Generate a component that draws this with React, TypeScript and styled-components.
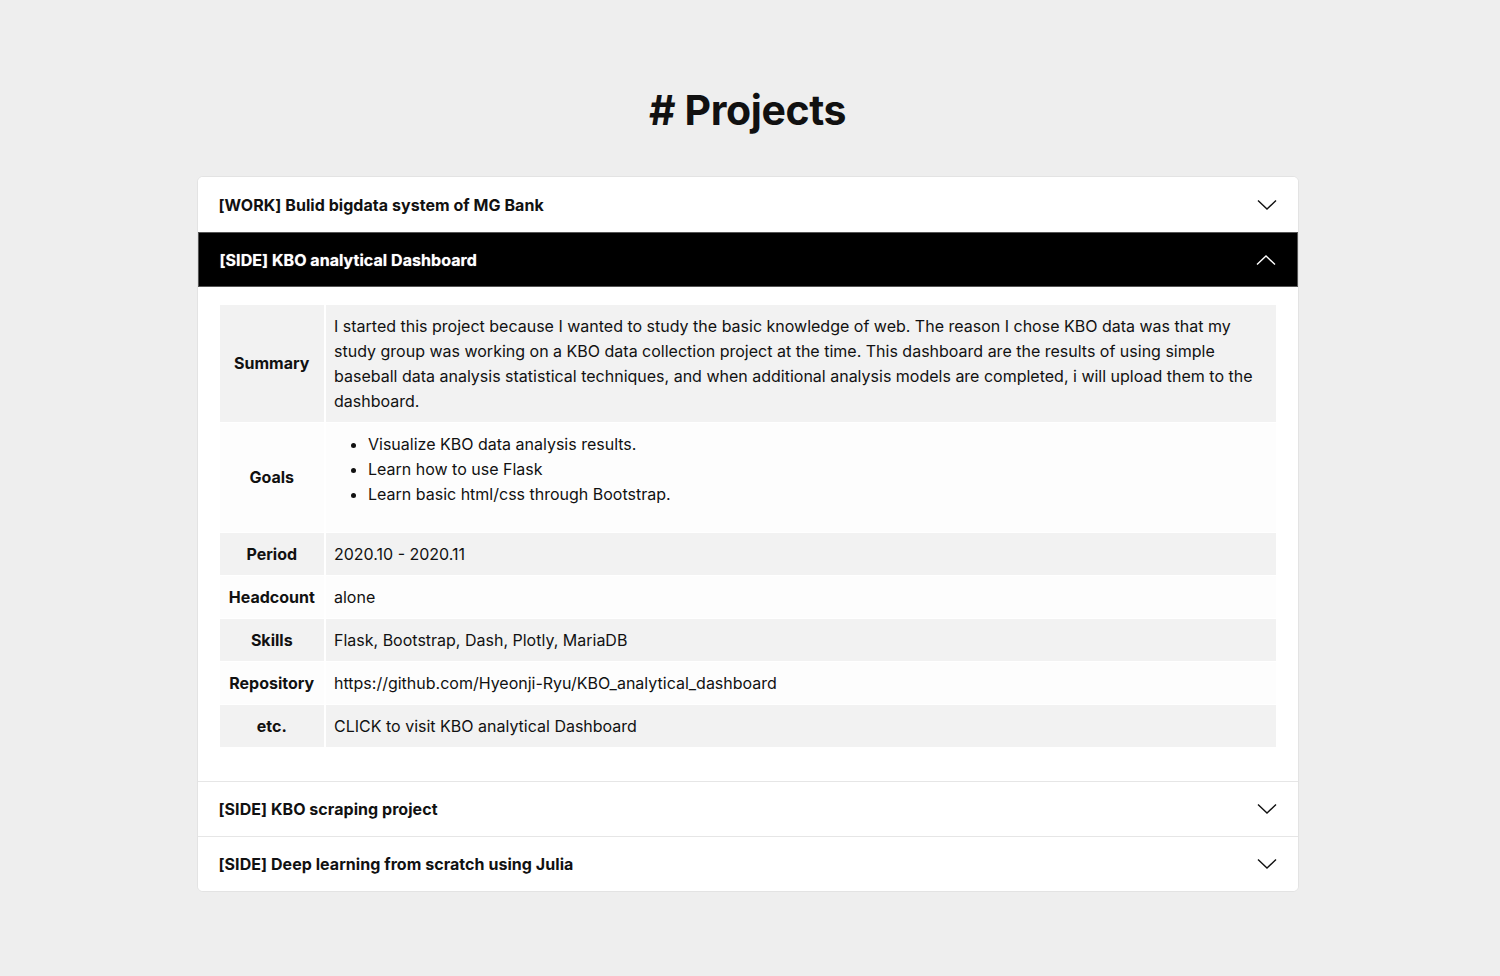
import React from "react";
import styled, { createGlobalStyle } from "styled-components";

const Global = createGlobalStyle`
  * { box-sizing: border-box; }
  html, body { margin: 0; padding: 0; }
  body {
    background: #eeeeee;
    font-family: Inter, "Noto Sans", "Liberation Sans", sans-serif;
    color: #111;
    -webkit-font-smoothing: antialiased;
  }
`;

const Page = styled.main`
  width: 1500px;
  min-height: 976px;
  padding-top: 86px;
  padding-right: 5px;
  display: flex;
  flex-direction: column;
  align-items: center;
`;

const Title = styled.h1`
  margin: 0 0 42px;
  font-size: 41px;
  line-height: 48px;
  font-weight: 700;
  letter-spacing: -0.4px;
  color: #111;
`;

const Accordion = styled.div`
  width: 1102px;
  background: #fff;
  border: 1px solid #e3e3e3;
  border-radius: 6px;
  overflow: hidden;
`;

const Item = styled.div<{ $plain?: boolean }>`
  border-top: ${(p) => (p.$plain ? "none" : "1px solid #e6e6e6")};
`;

const Header = styled.button<{ $open?: boolean; $tall?: boolean }>`
  width: 100%;
  display: flex;
  align-items: center;
  justify-content: space-between;
  padding: 0 21px;
  height: ${(p) => (p.$tall || p.$open ? "55px" : "54px")};
  border: ${(p) => (p.$open ? "1px solid #555" : "none")};
  background: ${(p) => (p.$open ? "#000" : "#fff")};
  color: ${(p) => (p.$open ? "#fff" : "#111")};
  font-family: inherit;
  font-size: 16px;
  font-weight: 700;
  line-height: 24px;
  letter-spacing: 0.05px;
  text-align: left;
  cursor: pointer;
  text-shadow: ${(p) => (p.$open ? "0 0 1px rgba(255,255,255,0.6)" : "none")};
`;

const Body = styled.div`
  padding: 17px 21px 33px;
`;

const Table = styled.table`
  width: 100%;
  border-collapse: collapse;
  font-size: 16px;
  line-height: 25px;
  color: #111;
`;

const Row = styled.tr<{ $striped?: boolean }>`
  background: ${(p) => (p.$striped ? "#f2f2f2" : "#fdfdfd")};
`;

const Label = styled.th`
  width: 106px;
  padding: 8.5px 7px;
  border: 1px solid #fff;
  border-right-width: 2px;
  font-weight: 700;
  text-align: center;
  vertical-align: middle;
  white-space: nowrap;
`;

const Value = styled.td`
  padding: 8.5px 8px;
  border: 1px solid #fff;
  font-weight: 400;
  vertical-align: middle;
`;

const List = styled.ul`
  margin: 0 0 17px;
  padding-left: 34px;
`;

const Chevron = ({ up }: { up?: boolean }) => (
  <svg width="20" height="12" viewBox="0 0 20 12" fill="none">
    <polyline
      points={up ? "1,10.5 10,2 19,10.5" : "1,1.5 10,10 19,1.5"}
      stroke="currentColor"
      strokeWidth="1.4"
      strokeLinejoin="miter"
    />
  </svg>
);

const rows: { label: string; content: React.ReactNode; striped: boolean }[] = [
  {
    label: "Summary",
    striped: true,
    content:
      "I started this project because I wanted to study the basic knowledge of web. The reason I chose KBO data was that my study group was working on a KBO data collection project at the time. This dashboard are the results of using simple baseball data analysis statistical techniques, and when additional analysis models are completed, i will upload them to the dashboard.",
  },
  {
    label: "Goals",
    striped: false,
    content: (
      <List>
        <li>Visualize KBO data analysis results.</li>
        <li>Learn how to use Flask</li>
        <li>Learn basic html/css through Bootstrap.</li>
      </List>
    ),
  },
  { label: "Period", striped: true, content: "2020.10 - 2020.11" },
  { label: "Headcount", striped: false, content: "alone" },
  { label: "Skills", striped: true, content: "Flask, Bootstrap, Dash, Plotly, MariaDB" },
  {
    label: "Repository",
    striped: false,
    content: "https://github.com/Hyeonji-Ryu/KBO_analytical_dashboard",
  },
  { label: "etc.", striped: true, content: "CLICK to visit KBO analytical Dashboard" },
];

export default function App() {
  return (
    <>
      <Global />
      <Page>
        <Title># Projects</Title>
        <Accordion>
          <Item $plain>
            <Header $tall>
              <span>[WORK] Bulid bigdata system of MG Bank</span>
              <Chevron />
            </Header>
          </Item>
          <Item $plain>
            <Header $open>
              <span>[SIDE] KBO analytical Dashboard</span>
              <Chevron up />
            </Header>
            <Body>
              <Table>
                <tbody>
                  {rows.map((r) => (
                    <Row key={r.label} $striped={r.striped}>
                      <Label>{r.label}</Label>
                      <Value>{r.content}</Value>
                    </Row>
                  ))}
                </tbody>
              </Table>
            </Body>
          </Item>
          <Item>
            <Header>
              <span>[SIDE] KBO scraping project</span>
              <Chevron />
            </Header>
          </Item>
          <Item>
            <Header>
              <span>[SIDE] Deep learning from scratch using Julia</span>
              <Chevron />
            </Header>
          </Item>
        </Accordion>
      </Page>
    </>
  );
}
